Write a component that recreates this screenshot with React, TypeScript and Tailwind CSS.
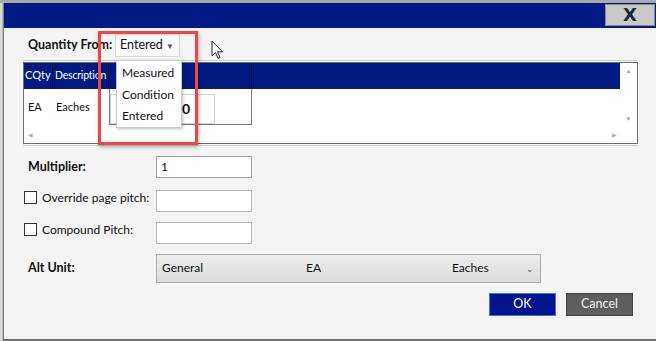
import React from "react";

const font = { fontFamily: '"Segoe UI", Lato, "Open Sans", sans-serif' };

function Checkbox() {
  return <div className="w-[13px] h-[13px] border border-[#333] bg-white shrink-0" />;
}

export default function App() {
  return (
    <div className="w-[656px] h-[341px] overflow-hidden bg-[#dcdcdc] relative text-[#111]" style={font}>
      <div className="h-[3px] bg-[#a9a9a9]" />
      <div className="flex h-[338px]">
        <div className="w-[3px] bg-[#d8d8d8] border-r border-[#bdbdbd]" />
        <div className="flex-1 flex flex-col border-l border-[#7a7a7a] border-b-2 border-b-[#6f6f6f]">
          {/* title bar */}
          <div className="h-[25px] bg-[#021a84] flex justify-end items-start pt-[1px] pr-[1px]">
            <div className="w-[50px] h-[22px] bg-[#c8c8c8] border border-[#8d8d8d] flex items-center justify-center text-[18px] font-bold text-[#18273c] leading-none" style={{ fontFamily: '"DejaVu Sans", "Liberation Sans", sans-serif' }}>
              X
            </div>
          </div>
          {/* body */}
          <div className="flex-1 bg-[#f4f4f4] flex flex-col pl-[19px] pr-[18px]">
            {/* quantity from */}
            <div className="flex items-center mt-[6px] h-[23px]">
              <span className="pl-[5px] text-[12.5px] font-bold w-[92px]">Quantity From:</span>
              <div className="w-[65px] h-[23px] bg-[#fbfbfb] border border-[#d6d6d6] flex items-center pl-[4px] text-[12.5px]">
                <span>Entered</span>
                <span className="ml-auto mr-[5px] text-[8px] text-[#555]">▼</span>
              </div>
            </div>
            {/* table */}
            <div className="mt-[3px] border-t border-b border-[#cfcfcf] pt-[1px] pb-[1px]">
              <div className="border border-[#6d6d6d] bg-white h-[82px] flex flex-col">
                <div className="flex h-[63px]">
                  <div className="flex-1 flex flex-col">
                    <div className="h-[26px] bg-[#011a82] border-b border-[#1b1b40] flex text-white text-[11px]">
                      <div className="w-[29px] border-r border-[#0a0a40] flex items-center pl-[1px]">CQty</div>
                      <div className="w-[56px] border-r border-[#0a0a40] flex items-center pl-[2px] overflow-hidden whitespace-nowrap text-[10.5px] tracking-[-0.2px]">Description</div>
                      <div className="w-[143px] border-r border-[#0a0a40]" />
                      <div className="flex-1" />
                    </div>
                    <div className="h-[36px] flex text-[11px]">
                      <div className="w-[29px] flex items-center pl-[4px]">EA</div>
                      <div className="w-[56px] flex items-center pl-[3px]">Eaches</div>
                      <div className="w-[143px] border border-t-0 border-[#7a7a7a] flex items-center">
                        <div className="w-[105px] h-[30px] mt-[4px] border border-[#cfcfcf] flex items-center justify-end pr-[24px] text-[14px] font-bold">1.00</div>
                      </div>
                    </div>
                  </div>
                  <div className="w-[17px] flex flex-col items-center justify-between py-[3px] text-[6px] text-[#a0a0a0]">
                    <span>▲</span>
                    <span>▼</span>
                  </div>
                </div>
                <div className="flex-1 flex items-center justify-between px-[4px] pr-[20px] text-[6px] text-[#b0b0b0]">
                  <span>◀</span>
                  <span>▶</span>
                </div>
              </div>
            </div>
            {/* multiplier */}
            <div className="flex items-center mt-[10px] h-[22px]">
              <span className="pl-[5px] text-[12.5px] font-bold w-[133px]">Multiplier:</span>
              <div className="w-[96px] h-[22px] bg-white border border-[#a5a5a5] flex items-center pl-[4px] text-[12px]">1</div>
            </div>
            {/* override */}
            <div className="flex items-start mt-[12px] h-[22px]">
              <div className="w-[133px] flex items-start gap-[5px] pl-[1px] pt-[1px]">
                <Checkbox />
                <span className="text-[12px] leading-[13px]">Override page pitch:</span>
              </div>
              <div className="w-[96px] h-[22px] bg-white border border-[#b5b5b5]" />
            </div>
            {/* compound */}
            <div className="flex items-start mt-[10px] h-[22px]">
              <div className="w-[133px] flex items-start gap-[5px] pl-[1px] pt-[1px]">
                <Checkbox />
                <span className="text-[12px] leading-[13px]">Compound Pitch:</span>
              </div>
              <div className="w-[96px] h-[22px] bg-white border border-[#b5b5b5]" />
            </div>
            {/* alt unit */}
            <div className="flex items-center mt-[10px] h-[29px]">
              <span className="pl-[5px] text-[12.5px] font-bold w-[133px]">Alt Unit:</span>
              <div className="w-[385px] h-[29px] bg-gradient-to-b from-[#ececec] to-[#dcdcdc] border border-[#acacac] flex items-start pt-[4px] text-[12px] relative">
                <span className="ml-[5px] w-[144px]">General</span>
                <span className="w-[146px]">EA</span>
                <span>Eaches</span>
                <span className="absolute right-[6px] top-[7px] text-[9px] text-[#555]">⌄</span>
              </div>
            </div>
            {/* buttons */}
            <div className="flex justify-end mt-[10px] gap-[10px] pr-[5px]">
              <button className="w-[67px] h-[23px] bg-[#04148a] border border-[#3a78d6] text-white text-[12.5px] flex items-center justify-center">OK</button>
              <button className="w-[67px] h-[23px] bg-[#5e5e5e] border border-[#444] text-[#f0f0f0] text-[12.5px] flex items-center justify-center">Cancel</button>
            </div>
          </div>
        </div>
      </div>

      {/* dropdown list overlay */}
      <div className="absolute left-[116px] top-[60px] w-[66px] h-[68px] bg-white border border-[#cccccc] shadow-[1px_1px_3px_rgba(0,0,0,0.25)] flex flex-col pt-[1px] text-[12px]">
        <div className="h-[22px] flex items-center pl-[5px]">Measured</div>
        <div className="h-[22px] flex items-center pl-[5px]">Condition</div>
        <div className="h-[22px] flex items-center pl-[5px]">Entered</div>
      </div>

      {/* red highlight */}
      <div className="absolute left-[98px] top-[31px] w-[100px] h-[114px] border-[3px] border-[#ee4646] shadow-[1px_2px_4px_rgba(0,0,0,0.3)]" />

      {/* cursor */}
      <svg className="absolute left-[211px] top-[40px]" width="14" height="20" viewBox="0 0 14 20">
        <path d="M1 1 L1 16 L4.5 12.5 L7 18.5 L9 17.5 L6.5 11.8 L11.5 11.8 Z" fill="white" stroke="#222" strokeWidth="1" strokeLinejoin="round" />
      </svg>
    </div>
  );
}
